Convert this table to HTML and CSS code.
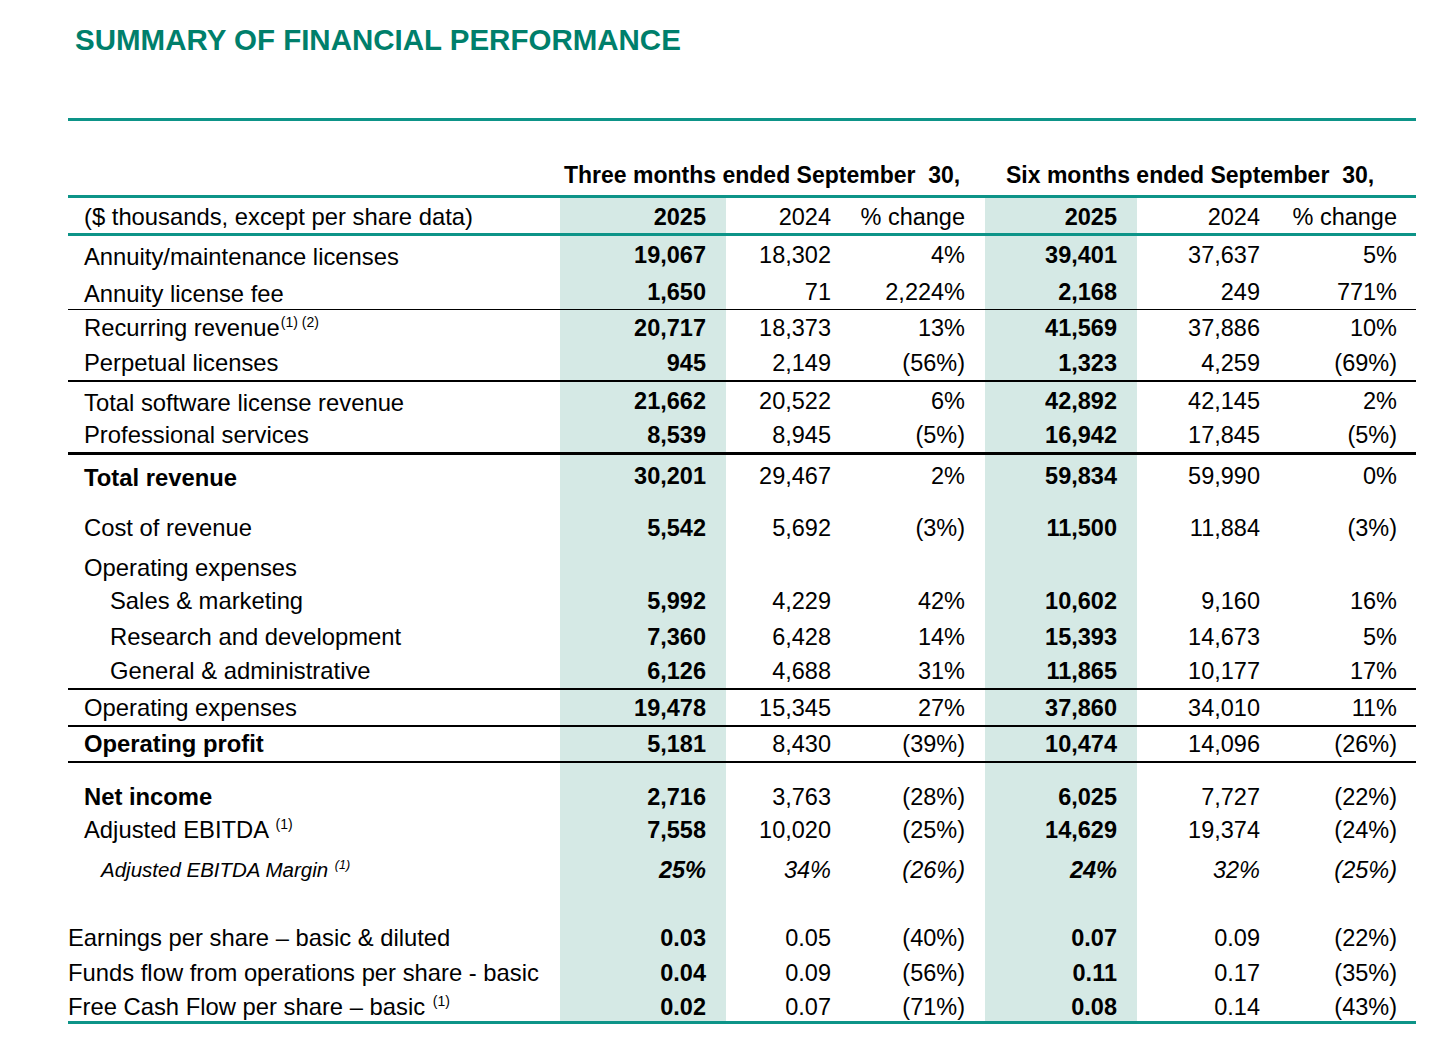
FILE: index.html
```html
<!DOCTYPE html>
<html>
<head>
<meta charset="utf-8">
<title>Summary of Financial Performance</title>
<link rel="stylesheet" href="styles.css">
</head>
<body>
<h1 class="title">SUMMARY OF FINANCIAL PERFORMANCE</h1>
<div class="table">
  <div class="period">
    <div></div>
    <div class="p1">Three months ended September&nbsp; 30,</div>
    <div class="p2">Six months ended September&nbsp; 30,</div>
  </div>
  <div class="row head">
    <div class="lab"><span>($ thousands, except per share data)</span></div>
    <div class="n b">2025</div><div class="n">2024</div><div class="n">% change</div>
    <div class="n b">2025</div><div class="n">2024</div><div class="n">% change</div>
  </div>

  <div class="row h36">
    <div class="lab lo"><span>Annuity/maintenance licenses</span></div>
    <div class="n b">19,067</div><div class="n">18,302</div><div class="n">4%</div>
    <div class="n b">39,401</div><div class="n">37,637</div><div class="n">5%</div>
  </div>
  <div class="row h37">
    <div class="lab lo"><span>Annuity license fee</span></div>
    <div class="n b">1,650</div><div class="n">71</div><div class="n">2,224%</div>
    <div class="n b">2,168</div><div class="n">249</div><div class="n">771%</div>
  </div>
  <div class="row h35 line1">
    <div class="lab"><span>Recurring revenue<sup class="fn">(1) (2)</sup></span></div>
    <div class="n b">20,717</div><div class="n">18,373</div><div class="n">13%</div>
    <div class="n b">41,569</div><div class="n">37,886</div><div class="n">10%</div>
  </div>
  <div class="row h35">
    <div class="lab"><span>Perpetual licenses</span></div>
    <div class="n b">945</div><div class="n">2,149</div><div class="n">(56%)</div>
    <div class="n b">1,323</div><div class="n">4,259</div><div class="n">(69%)</div>
  </div>
  <div class="row h36 line2">
    <div class="lab lo"><span>Total software license revenue</span></div>
    <div class="n b">21,662</div><div class="n">20,522</div><div class="n">6%</div>
    <div class="n b">42,892</div><div class="n">42,145</div><div class="n">2%</div>
  </div>
  <div class="row h34">
    <div class="lab"><span>Professional services</span></div>
    <div class="n b">8,539</div><div class="n">8,945</div><div class="n">(5%)</div>
    <div class="n b">16,942</div><div class="n">17,845</div><div class="n">(5%)</div>
  </div>
  <div class="row h38 line3">
    <div class="lab b lo"><span>Total revenue</span></div>
    <div class="n b">30,201</div><div class="n">29,467</div><div class="n">2%</div>
    <div class="n b">59,834</div><div class="n">59,990</div><div class="n">0%</div>
  </div>
  <div class="row h52">
    <div class="lab"><span>Cost of revenue</span></div>
    <div class="n b">5,542</div><div class="n">5,692</div><div class="n">(3%)</div>
    <div class="n b">11,500</div><div class="n">11,884</div><div class="n">(3%)</div>
  </div>
  <div class="row h40">
    <div class="lab"><span>Operating expenses</span></div>
    <div class="n"></div><div class="n"></div><div class="n"></div>
    <div class="n"></div><div class="n"></div><div class="n"></div>
  </div>
  <div class="row h33">
    <div class="lab sub"><span>Sales &amp; marketing</span></div>
    <div class="n b">5,992</div><div class="n">4,229</div><div class="n">42%</div>
    <div class="n b">10,602</div><div class="n">9,160</div><div class="n">16%</div>
  </div>
  <div class="row h36">
    <div class="lab sub"><span>Research and development</span></div>
    <div class="n b">7,360</div><div class="n">6,428</div><div class="n">14%</div>
    <div class="n b">15,393</div><div class="n">14,673</div><div class="n">5%</div>
  </div>
  <div class="row h34">
    <div class="lab sub"><span>General &amp; administrative</span></div>
    <div class="n b">6,126</div><div class="n">4,688</div><div class="n">31%</div>
    <div class="n b">11,865</div><div class="n">10,177</div><div class="n">17%</div>
  </div>
  <div class="row h35 line2">
    <div class="lab"><span>Operating expenses</span></div>
    <div class="n b">19,478</div><div class="n">15,345</div><div class="n">27%</div>
    <div class="n b">37,860</div><div class="n">34,010</div><div class="n">11%</div>
  </div>
  <div class="row h34 line2">
    <div class="lab b"><span>Operating profit</span></div>
    <div class="n b">5,181</div><div class="n">8,430</div><div class="n">(39%)</div>
    <div class="n b">10,474</div><div class="n">14,096</div><div class="n">(26%)</div>
  </div>
  <div class="row h51 line2">
    <div class="lab b"><span>Net income</span></div>
    <div class="n b">2,716</div><div class="n">3,763</div><div class="n">(28%)</div>
    <div class="n b">6,025</div><div class="n">7,727</div><div class="n">(22%)</div>
  </div>
  <div class="row h33">
    <div class="lab"><span>Adjusted EBITDA <sup class="fn">(1)</sup></span></div>
    <div class="n b">7,558</div><div class="n">10,020</div><div class="n">(25%)</div>
    <div class="n b">14,629</div><div class="n">19,374</div><div class="n">(24%)</div>
  </div>
  <div class="row h40 margin">
    <div class="lab mi"><span>Adjusted EBITDA Margin <sup class="fn">(1)</sup></span></div>
    <div class="n b">25%</div><div class="n">34%</div><div class="n">(26%)</div>
    <div class="n b">24%</div><div class="n">32%</div><div class="n">(25%)</div>
  </div>
  <div class="row h68">
    <div class="lab flush"><span>Earnings per share – basic &amp; diluted</span></div>
    <div class="n b">0.03</div><div class="n">0.05</div><div class="n">(40%)</div>
    <div class="n b">0.07</div><div class="n">0.09</div><div class="n">(22%)</div>
  </div>
  <div class="row h35">
    <div class="lab flush"><span>Funds flow from operations per share - basic</span></div>
    <div class="n b">0.04</div><div class="n">0.09</div><div class="n">(56%)</div>
    <div class="n b">0.11</div><div class="n">0.17</div><div class="n">(35%)</div>
  </div>
  <div class="row h31 last">
    <div class="lab flush"><span>Free Cash Flow per share – basic <sup class="fn">(1)</sup></span></div>
    <div class="n b">0.02</div><div class="n">0.07</div><div class="n">(71%)</div>
    <div class="n b">0.08</div><div class="n">0.14</div><div class="n">(43%)</div>
  </div>
</div>
</body>
</html>
```

FILE: styles.css
```css
html, body {
  margin: 0;
  padding: 0;
  background: #ffffff;
}
body {
  font-family: "Liberation Sans", Arial, sans-serif;
  color: #000;
  width: 1456px;
}
.title {
  margin: 0 0 61px 0;
  padding: 23px 0 0 75px;
  font-size: 29.5px;
  line-height: 34px;
  font-weight: bold;
  color: #007f6b;
}
.table {
  margin-left: 68px;
  width: 1348px;
  font-size: 23.5px;
}
.period {
  display: grid;
  grid-template-columns: 492px 425px 431px;
  height: 74px;
  border-top: 3px solid #0d9488;
  border-bottom: 3px solid #0d9488;
  font-weight: bold;
  font-size: 23px;
  line-height: 26px;
}
.period > div {
  display: flex;
  align-items: flex-end;
  padding-bottom: 7px;
}
.period .p1 { padding-left: 4px; }
.period .p2 { padding-left: 21px; }

.row {
  display: grid;
  grid-template-columns: 492px 166px 120px 139px 152px 138px 141px;
  line-height: 26px;
}
.row > div {
  display: flex;
  align-items: flex-end;
  padding-bottom: 4px;
  white-space: nowrap;
}
.row > :nth-child(2),
.row > :nth-child(5) {
  background: #d5e9e5;
}
.row > :nth-child(2) { padding-right: 20px; }
.row > :nth-child(3) { padding-right: 15px; }
.row > :nth-child(4) { padding-right: 20px; }
.row > :nth-child(5) { padding-right: 20px; }
.row > :nth-child(6) { padding-right: 15px; }
.row > :nth-child(7) { padding-right: 19px; }

.head {
  height: 35px;
  border-bottom: 3px solid #0d9488;
}
.head > div { padding-bottom: 3px; }

.lab { padding-left: 16px; font-size: 23.8px; }
.lab.lo { padding-bottom: 2px; }
.lab.sub { padding-left: 42px; }
.lab.flush { padding-left: 0; }
.n { justify-content: flex-end; }
.b { font-weight: bold; }

.margin {
  font-style: italic;
}
.margin .lab.mi {
  padding-left: 33px;
  font-size: 20.5px;
}

.fn {
  font-size: 14px;
  line-height: 0;
  vertical-align: 9px;
  margin-left: 1px;
}
.margin .fn { font-size: 12.5px; vertical-align: 8px; }

.line1 { border-top: 1px solid #000; }
.line2 { border-top: 2px solid #000; }
.line3 { border-top: 3px solid #000; }

.last {
  border-bottom: 3px solid #0d9488;
}
.last > div { padding-bottom: 1px; }

.h31 { height: 31px; }
.h33 { height: 33px; }
.h34 { height: 34px; }
.h35 { height: 35px; }
.h36 { height: 36px; }
.h37 { height: 37px; }
.h38 { height: 38px; }
.h40 { height: 40px; }
.h51 { height: 51px; }
.h52 { height: 52px; }
.h68 { height: 68px; }
```
